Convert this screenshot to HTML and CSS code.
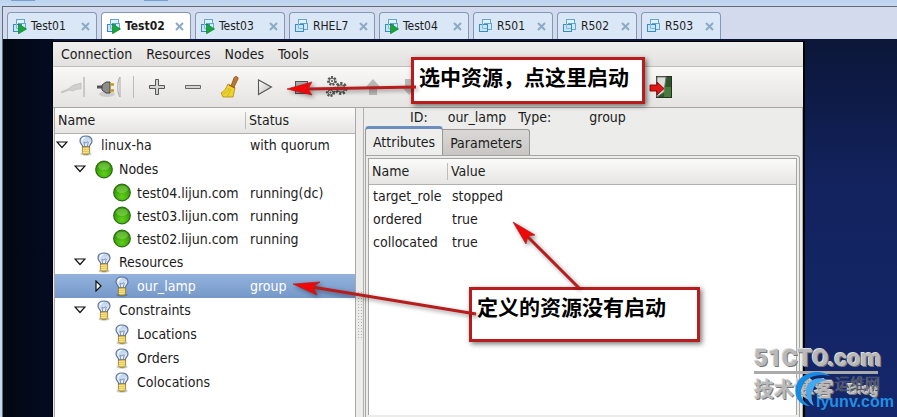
FILE: index.html
```html
<!DOCTYPE html>
<html lang="zh-CN">
<head>
<meta charset="utf-8">
<title>Linux HA Management Client</title>
<link rel="stylesheet" href="styles.css">
</head>
<body>
<svg class="defs" aria-hidden="true">
  <defs>
    <radialGradient id="green" cx=".5" cy=".75" r=".7"><stop offset="0" stop-color="#5fd01c"/><stop offset=".6" stop-color="#41a80c"/><stop offset="1" stop-color="#2f8a06"/></radialGradient>
    <linearGradient id="play" x1="0" y1="0" x2="1" y2="1"><stop offset="0" stop-color="#fff"/><stop offset="1" stop-color="#b8b8b4"/></linearGradient>
    <linearGradient id="glass" x1="0" y1="0" x2="0" y2="1"><stop offset="0" stop-color="#b4cdec"/><stop offset="1" stop-color="#eef5fd"/></linearGradient>
    <symbol id="bulb" viewBox="0 0 16 22">
      <ellipse cx="8" cy="20" rx="6" ry="1.7" fill="#000" opacity=".22"/>
      <path d="M4.6 12.5C4.6 10.500 1.700 9 1.700 6.200C1.700 2.800 4.400 1 8 1s6.300 1.800 6.300 5.200c0 2.800-2.900 4.300-2.900 6.300z" fill="url(#glass)" stroke="#5c7396" stroke-width="1.200"/>
      <path d="M4 6c0-2 1.500-3.200 3.500-3.500" fill="none" stroke="#fff" stroke-width="1.300"/>
      <path d="M6.700 12L5.800 7.400l2 .9 1.400-1.200 1.200.5L9.300 12" fill="none" stroke="#7d8ea8"/>
      <path d="M4.200 12.500h7.600v6l-1.500 1.700H5.700l-1.500-1.700z" fill="#e3c352" stroke="#8d721f" stroke-width=".8"/>
      <path d="M4.700 14.200l6-.6M4.700 16.400l6.500-.7M4.700 18.500l6.400-.6" stroke="#fff5b6" stroke-width=".8"/>
    </symbol>
    <symbol id="node" viewBox="0 0 18 18">
      <circle cx="9" cy="9" r="8.300" fill="url(#green)" stroke="#2b6c12" stroke-width="1.200"/>
      <ellipse cx="9" cy="5.800" rx="5.800" ry="3.800" fill="#a6e878" opacity=".4"/>
    </symbol>
    <symbol id="open" viewBox="0 0 12 8"><path d="M1 1h10L6 6.500z" fill="#fff" stroke="#111" stroke-width="1.200"/></symbol>
    <symbol id="shut" viewBox="0 0 12 12"><path d="M4 1v10l5-5z" fill="#fff" stroke="#111" stroke-width="1.200"/></symbol>
    <symbol id="vm" viewBox="0 0 15 15">
      <rect x="4.500" y=".5" width="8" height="8" fill="#dff1fb" stroke="#65a6ce"/>
      <rect x="6.500" y="4.500" width="7" height="6" fill="#cfeaf8" stroke="#65a6ce"/>
      <rect x="1.500" y="5.500" width="8" height="7" fill="#c7e5f7" stroke="#3b8cbe"/>
      <path d="M4.500 5v4.500H9" fill="none" stroke="#80bbdc"/>
    </symbol>
    <symbol id="vmrun" viewBox="0 0 15 15">
      <use href="#vm" width="15" height="15"/>
      <path d="M6.500 5l8 5-8 4.800z" fill="#18a63d" stroke="#0d812b" stroke-width=".7"/>
    </symbol>
    <symbol id="close" viewBox="0 0 9 9"><path d="M1 1l7 7M8 1L1 8" stroke="#8daac5" stroke-width="2"/></symbol>
  </defs>
</svg>

<div class="appbar"><span class="chip"></span><span class="chip"></span></div>
<main class="frame">
  <nav class="vmtabs" aria-label="Virtual machines">
    <div class="vmtab"><button class="vmname"><svg class="vmicon"><use href="#vmrun"/></svg>Test01</button><button class="x" aria-label="Close"><svg><use href="#close"/></svg></button></div>
    <div class="vmtab current"><button class="vmname"><svg class="vmicon"><use href="#vmrun"/></svg>Test02</button><button class="x" aria-label="Close"><svg><use href="#close"/></svg></button></div>
    <div class="vmtab"><button class="vmname"><svg class="vmicon"><use href="#vmrun"/></svg>Test03</button><button class="x" aria-label="Close"><svg><use href="#close"/></svg></button></div>
    <div class="vmtab medium"><button class="vmname"><svg class="vmicon"><use href="#vm"/></svg>RHEL7</button><button class="x" aria-label="Close"><svg><use href="#close"/></svg></button></div>
    <div class="vmtab"><button class="vmname"><svg class="vmicon"><use href="#vmrun"/></svg>Test04</button><button class="x" aria-label="Close"><svg><use href="#close"/></svg></button></div>
    <div class="vmtab short"><button class="vmname"><svg class="vmicon"><use href="#vm"/></svg>R501</button><button class="x" aria-label="Close"><svg><use href="#close"/></svg></button></div>
    <div class="vmtab short"><button class="vmname"><svg class="vmicon"><use href="#vm"/></svg>R502</button><button class="x" aria-label="Close"><svg><use href="#close"/></svg></button></div>
    <div class="vmtab short"><button class="vmname"><svg class="vmicon"><use href="#vm"/></svg>R503</button><button class="x" aria-label="Close"><svg><use href="#close"/></svg></button></div>
  </nav>

  <div class="desktop">
    <section class="window">
      <div class="menubar"><button>Connection</button><button>Resources</button><button>Nodes</button><button>Tools</button></div>
      <div class="toolbar">
        <button class="tool" aria-label="Connect" disabled><svg viewBox="0 0 24 24"><path d="M0 17l7-3 4-3c3-2 7-2 9-3v6c-3 0-5 0-8 2l-4-1-7 3z" fill="#d0d0ce" stroke="#bababa" stroke-width=".7"/><path d="M23 2v20" stroke="#c9c9c7" stroke-width="2"/></svg></button>
        <button class="tool" aria-label="Disconnect"><svg viewBox="0 0 24 24"><ellipse cx="10" cy="19" rx="8" ry="3" opacity=".12"/><path d="M0 12h6" stroke="#555" stroke-width="3"/><path d="M5 10l4-3h4v11H9l-4-3z" fill="#8b8c87" stroke="#444"/><path d="M13 9.500h4M13 15.500h4" stroke="#c49a12" stroke-width="2.500"/><path d="M23 2c-3 3-3 17 0 20z" fill="#eee" stroke="#aaa"/></svg></button>
        <span class="rule"></span>
        <button class="tool" aria-label="Add"><svg viewBox="0 0 24 24"><path d="M10.500 4.500h3v6h6v3h-6v6h-3v-6h-6v-3h6z" fill="#d4d5d2" stroke="#555753"/></svg></button>
        <button class="tool" aria-label="Remove"><svg viewBox="0 0 24 24"><path d="M4.500 10.500h15v3h-15z" fill="#d4d5d2" stroke="#666864"/></svg></button>
        <button class="tool" aria-label="Clean up"><svg viewBox="0 0 24 24"><path d="M14 11l3-8c1-3 5-1 4 1l-4 8z" fill="#bd782c" stroke="#80511b" stroke-width=".8"/><path d="M11 9l7 4-2 9H6L4 18c4-2 5-5 7-9z" fill="#efd331" stroke="#ad8b0a" stroke-width=".8"/><path d="M12 10l6 3" stroke="#a6541d" stroke-width="1.300"/><path d="M12 13c-1 3-3 5-6 6M14 14l-4 8" fill="none" stroke="#c0a418" stroke-width=".7"/></svg></button>
        <button class="tool" aria-label="Start"><svg viewBox="0 0 24 24"><path d="M5.500 5v14.500L18.500 12z" fill="url(#play)" stroke="#555753" stroke-width="1.100"/></svg></button>
        <button class="tool" aria-label="Stop"><svg viewBox="0 0 24 24"><rect x="6.500" y="6.500" width="12" height="12" fill="#ababab" stroke="#555"/></svg></button>
        <button class="tool" aria-label="Default"><svg viewBox="0 0 24 24"><g fill="#eee" stroke="#555753"><circle cx="7" cy="6" r="3.700" stroke-width="2.400" stroke-dasharray="2 1.200"/><circle cx="7" cy="6" r="2.800"/><circle cx="5.500" cy="17.500" r="3.400" stroke-width="2.400" stroke-dasharray="2 1.200"/><circle cx="5.500" cy="17.500" r="2.500"/><circle cx="16" cy="13.500" r="5" stroke-width="3" stroke-dasharray="2.200 1.500"/><circle cx="16" cy="13.500" r="3.800" fill="#bbb"/></g><circle cx="7" cy="6" r="1" fill="#555"/><circle cx="5.500" cy="17.500" r="1" fill="#555"/><circle cx="16" cy="13.500" r="1.300" fill="#555"/></svg></button>
        <button class="tool" aria-label="Move up" disabled><svg viewBox="0 0 24 24"><path d="M12 4l8 9h-4v7H8v-7H4z" fill="#b9b9b7"/></svg></button>
        <button class="tool" aria-label="Move down" disabled><svg viewBox="0 0 24 24"><path d="M12 20l8-9h-4V4H8v7H4z" fill="#b9b9b7"/></svg></button>
        <button class="tool exit" aria-label="Exit"><svg viewBox="0 0 24 24"><rect x="7.500" y="1.500" width="15" height="21" fill="#2f552b" stroke="#263021"/><path d="M15 12h7v10h-7z" fill="#467b3b"/><path d="M8 2h9l-2 15-7 5z" fill="#dededa" stroke="#777"/><path d="M1 10h7V7l7 6.500L8 20v-4H1z" fill="#df1616" stroke="#8d0b0b"/></svg></button>
      </div>
      <div class="panes">
        <div class="treepane">
          <table class="grid tree">
            <thead><tr><th class="namecol">Name</th><th>Status</th></tr></thead>
            <tbody>
              <tr><td><div class="cell"><svg class="tri"><use href="#open"/></svg><svg class="ico"><use href="#bulb"/></svg>linux-ha</div></td><td>with quorum</td></tr>
              <tr><td><div class="cell l1"><svg class="tri"><use href="#open"/></svg><svg class="ico"><use href="#node"/></svg>Nodes</div></td><td></td></tr>
              <tr class="leaf"><td><div class="cell l2"><span class="tri"></span><svg class="ico"><use href="#node"/></svg>test04.lijun.com</div></td><td>running(dc)</td></tr>
              <tr class="leaf"><td><div class="cell l2"><span class="tri"></span><svg class="ico"><use href="#node"/></svg>test03.lijun.com</div></td><td>running</td></tr>
              <tr class="leaf"><td><div class="cell l2"><span class="tri"></span><svg class="ico"><use href="#node"/></svg>test02.lijun.com</div></td><td>running</td></tr>
              <tr><td><div class="cell l1"><svg class="tri"><use href="#open"/></svg><svg class="ico"><use href="#bulb"/></svg>Resources</div></td><td></td></tr>
              <tr class="selected"><td><div class="cell l2"><svg class="tri"><use href="#shut"/></svg><svg class="ico"><use href="#bulb"/></svg>our_lamp</div></td><td>group</td></tr>
              <tr><td><div class="cell l1"><svg class="tri"><use href="#open"/></svg><svg class="ico"><use href="#bulb"/></svg>Constraints</div></td><td></td></tr>
              <tr><td><div class="cell l2"><span class="tri"></span><svg class="ico"><use href="#bulb"/></svg>Locations</div></td><td></td></tr>
              <tr><td><div class="cell l2"><span class="tri"></span><svg class="ico"><use href="#bulb"/></svg>Orders</div></td><td></td></tr>
              <tr><td><div class="cell l2"><span class="tri"></span><svg class="ico"><use href="#bulb"/></svg>Colocations</div></td><td></td></tr>
            </tbody>
          </table>
        </div>
        <div class="splitter"><span class="grip"></span></div>
        <div class="detail">
          <dl class="info"><dt>ID:</dt><dd class="id">our_lamp</dd><dt>Type:</dt><dd class="type">group</dd></dl>
          <div class="tabs"><button class="tab active">Attributes</button><button class="tab">Parameters</button></div>
          <div class="page">
            <div class="sheet">
              <table class="grid attrs">
                <thead><tr><th class="namecol">Name</th><th>Value</th></tr></thead>
                <tbody>
                  <tr class="leaf"><td>target_role</td><td>stopped</td></tr>
                  <tr class="leaf"><td>ordered</td><td>true</td></tr>
                  <tr class="leaf"><td>collocated</td><td>true</td></tr>
                </tbody>
              </table>
            </div>
          </div>
        </div>
      </div>
    </section>
  </div>
</main>

<div class="note start">选中资源，点这里启动</div>
<div class="note stopped">定义的资源没有启动</div>
<svg class="arrows" viewBox="0 0 897 417" aria-hidden="true">
  <g fill="none" stroke="#b81c1c" stroke-width="3"><path d="M416 87L308 89"/><path d="M476 314L312 287"/><path d="M579 288L525 234"/></g>
  <g fill="#ee0808" stroke="#b81c1c" stroke-width=".7"><path d="M287 89l25-7-4 7 4 6z"/><path d="M293 284l27-2-7 5 4 8z"/><path d="M513 222l22 13-7 1-2 8z"/></g>
</svg>

<div class="mark">
  <div class="brand">51CTO.com</div>
  <div class="blogline"><span>技术博客</span><span class="blog">Blog</span></div>
</div>
<svg class="swirl" viewBox="0 0 44 40" aria-hidden="true"><path d="M38 6C27-2 8 2 4 16c-3 12 5 20 14 20C9 31 7 23 11 15 15 6 27 3 38 6z" fill="#1689e0"/><path d="M35 10c-11-5-21 2-21 11 0 7 3 12 8 15-3-7-4-12-1-17 3-6 8-8 14-9z" fill="#45a9ef"/></svg>
<div class="cnsite">运维网</div>
<div class="site">iyunv.com</div>
</body>
</html>
```

FILE: styles.css
```css
* { box-sizing: border-box; }
body {
  margin: 0;
  min-height: 100vh;
  display: flex;
  flex-direction: column;
  position: relative;
  overflow: hidden;
  background: #c7d8ee;
  color: #1c1c1c;
  font: 14px/20px "DejaVu Sans Condensed", "DejaVu Sans", sans-serif;
}
button { border: 0; background: none; padding: 0; margin: 0; font: inherit; color: inherit; }
svg { display: block; flex: none; }
.defs { position: absolute; width: 0; height: 0; }
.appbar { height: 6px; display: flex; gap: 109px; padding-left: 11px; background: linear-gradient(#bdd3ee, #c6daf1); }
.chip { width: 24px; height: 1px; background: #7aa0cc; }
.frame { flex: 1; display: flex; flex-direction: column; margin-left: 2px; border-top: 1px solid #636b76; border-left: 1px solid #636b76; }

.vmtabs { display: flex; align-items: flex-end; gap: 4px; height: 32px; padding-left: 4px; background: #d4daed; }
.vmtab { width: 90px; height: 27px; padding: 0 6px 0 4px; display: flex; align-items: center; justify-content: space-between; background: #dae7f6; border: 1px solid #8399b3; border-bottom: 0; border-radius: 4px 4px 0 0; font-size: 12px; }
.vmtab.medium { width: 86px; }
.vmtab.short { width: 80px; }
.vmtab.current { background: #fff; font-weight: bold; }
.vmname { display: flex; align-items: center; gap: 4px; }
.vmicon { width: 15px; height: 15px; }
.x svg { width: 9px; height: 9px; }

.desktop { flex: 1; display: flex; padding: 2px 92px 0 49px; background: linear-gradient(90deg, #020710 0, #030b22 50px, transparent 51px), linear-gradient(#0b1638, #13235f 150px, #14276b); }
.window { flex: 1; display: flex; flex-direction: column; border: 1px solid #000; border-right-width: 2px; border-bottom: 0; background: #ececea; }
.menubar { display: flex; gap: 14px; height: 25px; padding: 0 8px; align-items: center; background: linear-gradient(#efefed, #e2e1df); border-bottom: 1px solid #bfbfbb; }
.toolbar { display: flex; gap: 12px; height: 41px; padding: 0 8px; align-items: center; background: linear-gradient(#f8f8f7, #e4e3e1); border-bottom: 1px solid #a5a5a1; }
.tool svg { width: 24px; height: 24px; }
.rule { width: 1px; height: 22px; margin-right: -1px; background: #bcbcb8; }
.exit { margin-left: auto; margin-right: 122px; }

.panes { flex: 1; display: flex; }
.treepane { flex: 0 0 302px; margin-left: 1px; border: 1px solid #aaa9a5; border-bottom: 0; border-top: 0; background: #fff; }
.splitter { width: 8px; display: flex; align-items: center; justify-content: center; padding-top: 105px; border-right: 1px solid #b1b0ac; }
.grip { width: 5px; height: 48px; background: radial-gradient(circle, #aaa 1px, transparent 1px) 0 0 / 3px 3px; }
.detail { flex: 1; display: flex; flex-direction: column; padding: 0 2px 0 1px; border-right: 1px solid #aaa; }

.grid { width: 100%; border-collapse: collapse; table-layout: fixed; }
.grid th { height: 25px; padding: 0 3px; text-align: left; font-weight: normal; background: linear-gradient(#fbfbfa, #e6e5e3); border-bottom: 1px solid #b1b0ac; }
.grid td { height: 24px; padding: 0 4px; white-space: nowrap; }
.grid .leaf td { height: 23px; }
.grid .namecol { background: linear-gradient(#bdbcb8, #bdbcb8) right center / 1px 17px no-repeat, linear-gradient(#fbfbfa, #e6e5e3); }
.tree .namecol { width: 191px; }
.tree td:first-child { padding: 0 0 0 1px; }
.cell { display: flex; align-items: center; }
.l1 { padding-left: 18px; }
.l2 { padding-left: 36px; }
.tri { width: 12px; height: 12px; }
.ico { width: 18px; height: 21px; margin: 0 6px 0 9px; }
.selected { background: linear-gradient(#93b3dd, #7598c8); color: #fff; }

.info { display: flex; height: 18px; margin: 0; padding-left: 45px; align-items: center; }
.info dd { margin: 0; }
.info .id { margin: 0 12px 0 20px; }
.info .type { margin-left: 38px; }
.tabs { display: flex; align-items: flex-end; }
.tab { height: 26px; padding: 0 7px; background: linear-gradient(#dad9d7, #c7c6c3); border: 1px solid #999894; border-left: 0; border-bottom: 0; border-radius: 0 3px 0 0; }
.tab.active { height: 29px; background: #eeeeec; border-top: 3px solid #6a8fbe; border-left: 1px solid #999894; border-radius: 4px 4px 0 0; }
.page { flex: 1; display: flex; padding: 2px; border: 1px solid #a5a5a1; border-bottom: 0; border-top-right-radius: 4px; }
.sheet { flex: 1; background: #fff; border: 1px solid #a5a5a1; border-bottom: 0; }
.attrs .namecol { width: 79px; }

.note { position: absolute; padding: 4px 5px; background: #fff; border: 3px solid #b81c1c; box-shadow: 2px 2px 5px #0008; color: #000; font: bold 21px/24px "Noto Sans CJK SC", sans-serif; white-space: nowrap; }
.note.start { left: 411px; top: 57px; width: 234px; height: 47px; }
.note.stopped { left: 469px; top: 287px; width: 231px; height: 55px; }
.arrows { position: absolute; left: 0; top: 0; width: 897px; height: 417px; pointer-events: none; filter: drop-shadow(2px 2px 2px #0006); }

.mark { position: absolute; left: 754px; top: 344px; width: 124px; color: #b9b9b9; text-shadow: 1px 1px 0 #777, -1px -1px 0 #ddd; }
.brand { height: 30px; border-bottom: 3px solid #aaa; font: 900 24px/28px Roboto, "Liberation Sans", sans-serif; white-space: nowrap; }
.blogline { display: flex; justify-content: space-between; align-items: center; padding-top: 2px; font: bold 20px/26px "Noto Sans CJK SC", sans-serif; }
.blogline .blog { font: bold 14px/16px "Liberation Sans", sans-serif; }
.swirl { position: absolute; left: 792px; top: 370px; width: 44px; height: 40px; }
.cnsite { position: absolute; left: 835px; top: 373px; color: #4a5060; font: 15px/20px "Noto Sans CJK SC", sans-serif; text-shadow: 0 0 1px #aaa; }
.site { position: absolute; left: 816px; top: 392px; color: #238fe3; font: bold 16px/20px "Liberation Sans", sans-serif; }
```
